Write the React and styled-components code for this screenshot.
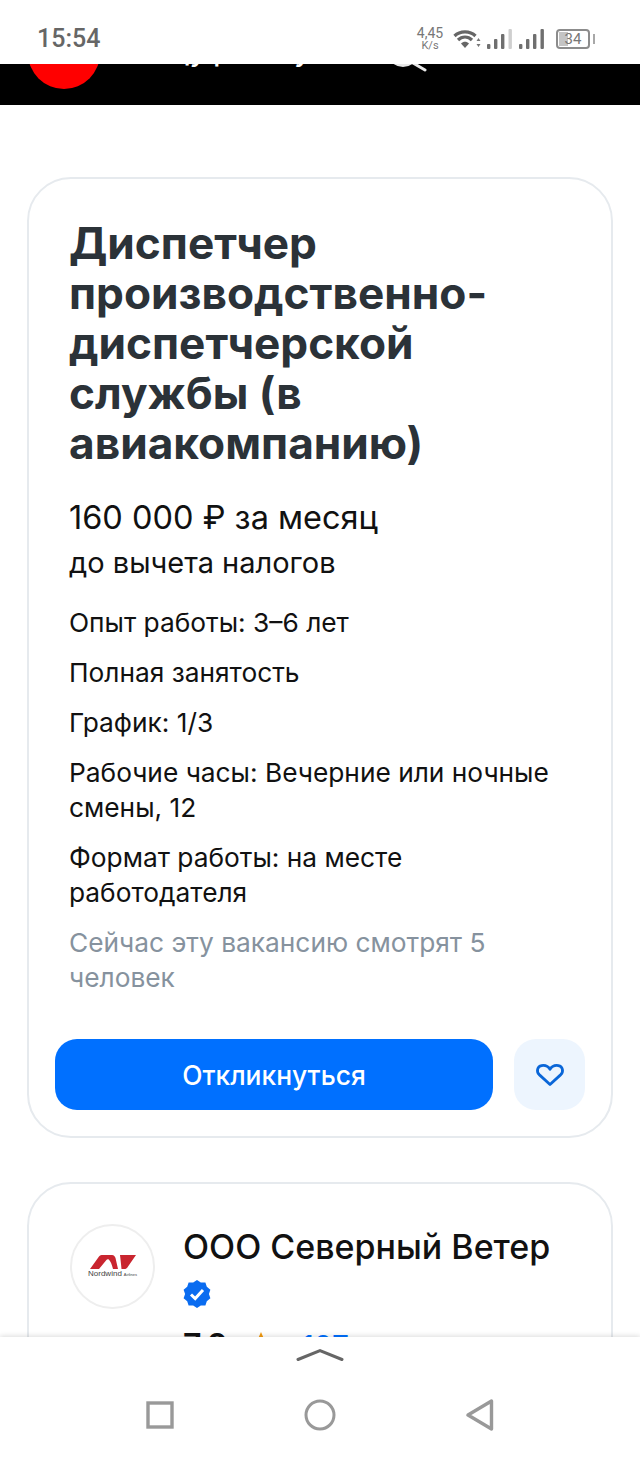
import React from 'react'
import styled, { createGlobalStyle } from 'styled-components'

const GlobalStyle = createGlobalStyle`
    html, body {
        margin: 0;
        padding: 0;
        background: #fff;
    }
    * {
        box-sizing: border-box;
    }
`

const Screen = styled.div`
    width: 640px;
    height: 1458px;
    display: flex;
    flex-direction: column;
    overflow: hidden;
    background: #fff;
    font-family: Inter, 'Liberation Sans', sans-serif;
`

/* system status bar */
const StatusBar = styled.div`
    flex: none;
    height: 64px;
    display: flex;
    align-items: center;
    padding: 14px 50px 0 37px;
    font-family: Roboto, sans-serif;
    color: #666;
`

const Clock = styled.div`
    font-size: 25px;
    line-height: 28px;
    font-weight: 500;
    margin-right: auto;
`

const NetSpeed = styled.div`
    width: 28px;
    margin-right: 9px;
    text-align: center;
    font-size: 14px;
    line-height: 13px;
    color: #777;

    small {
        display: block;
        font-size: 11px;
        line-height: 12px;
    }
`

const StatusIcons = styled.div`
    display: flex;
    align-items: center;
`

const WifiIcon = styled.svg`
    margin-right: 6px;
`

const Signals = styled.div`
    display: flex;
    gap: 7px;
`

const BatteryBox = styled.div`
    position: relative;
    width: 34px;
    height: 20px;
    margin-left: 12px;
    border: 2px solid #8c8c8c;
    border-radius: 4px;
    font-size: 15px;
    line-height: 16px;
    text-align: center;
    color: #777;

    &::before {
        content: '';
        position: absolute;
        left: 1px;
        top: 1px;
        bottom: 1px;
        width: 9px;
        background: #c4c4c4;
    }

    &::after {
        content: '';
        position: absolute;
        right: -7px;
        top: 3px;
        width: 2px;
        height: 10px;
        background: #a8a8a8;
    }
`

const BatteryLevel = styled.span`
    position: relative;
`

const Content = styled.main`
    flex: 1;
    min-height: 0;
    overflow: hidden;
    display: flex;
    flex-direction: column;
`

/* black site header, scrolled almost out of the view */
const SiteHeader = styled.header`
    flex: none;
    height: 41px;
    background: #000;
    display: flex;
    align-items: flex-end;
    overflow: hidden;
    padding-left: 28px;
    color: #fff;
`

const LogoDot = styled.div`
    flex: none;
    width: 72px;
    height: 72px;
    margin-bottom: 16px;
    border-radius: 50%;
    background: #f00;
`

const HeaderTitle = styled.div`
    flex: none;
    width: 240px;
    margin: 0 0 37px 44px;
    font-size: 28px;
    line-height: 34px;
    font-weight: 500;
    white-space: nowrap;
`

const SearchIcon = styled.svg`
    flex: none;
    margin: 0 0 33px 4px;
`

const Cards = styled.div`
    display: flex;
    flex-direction: column;
    gap: 44px;
    padding: 72px 27px 0;
`

const Card = styled.section`
    border: 2px solid #e6eaee;
    border-radius: 44px;
    padding: ${(props) => props.$padding};
    background: #fff;
`

const Body = styled.div`
    padding: 0 14px;
`

const Title = styled.h1`
    margin: 0;
    font-size: 44.2px;
    line-height: 50px;
    font-weight: 700;
    color: #2b3238;
`

const Salary = styled.div`
    margin-top: 25px;
    font-size: 32.5px;
    line-height: 50px;
    color: #111;
`

const SalaryNote = styled.div`
    font-size: 29px;
    line-height: 40px;
    color: #111;
`

const Facts = styled.div`
    margin-top: 22px;
    display: flex;
    flex-direction: column;
    gap: 15px;
`

const Fact = styled.div`
    font-size: 26.3px;
    line-height: 35px;
    color: ${(props) => (props.$muted ? '#86929e' : '#111')};
`

const Actions = styled.div`
    display: flex;
    gap: 21px;
    margin-top: 44px;
`

const ApplyButton = styled.button`
    flex: 1;
    height: 71px;
    border: 0;
    border-radius: 22px;
    background: #0070ff;
    color: #fff;
    font-family: inherit;
    font-size: 26.4px;
    font-weight: 500;
`

const FavButton = styled.button`
    flex: none;
    width: 71px;
    height: 71px;
    border: 0;
    border-radius: 22px;
    background: #edf5fe;
    display: flex;
    align-items: center;
    justify-content: center;
    padding: 0;
`

const Company = styled.div`
    display: flex;
    gap: 28px;
`

const CompanyLogo = styled.div`
    flex: none;
    width: 85px;
    height: 85px;
    border: 2px solid #eeeeee;
    border-radius: 50%;
    display: flex;
    flex-direction: column;
    align-items: center;
    justify-content: center;
`

const LogoCaption = styled.div`
    font-family: 'Liberation Sans', sans-serif;
    font-size: 8px;
    line-height: 7px;
    margin-top: 1px;
    color: #444;
    white-space: nowrap;

    small {
        font-size: 4px;
        margin-left: 2px;
    }
`

const CompanyInfo = styled.div`
    padding-top: 1px;
`

const CompanyName = styled.h2`
    margin: 0;
    font-size: 34px;
    line-height: 44px;
    font-weight: 500;
    color: #111;
`

const VerifiedMark = styled.svg`
    display: block;
    margin-top: 11px;
`

const Rating = styled.div`
    display: flex;
    align-items: center;
    gap: 18px;
    margin-top: 19px;
    font-size: 32px;
    line-height: 38px;
    font-weight: 600;
    color: #111;
`

const Reviews = styled.span`
    margin-left: 8px;
    font-size: 30px;
    font-weight: 400;
    color: #0070ff;
`

/* system navigation bar */
const NavBar = styled.nav`
    position: relative;
    flex: none;
    height: 121px;
    background: #fff;
    box-shadow: 0 -1px 5px rgba(0, 0, 0, 0.14);
    display: flex;
    flex-direction: column;
    align-items: center;
    padding-top: 11px;
`

const NavKeys = styled.div`
    display: grid;
    grid-template-columns: repeat(3, 160px);
    justify-items: center;
    margin-top: 40px;
`

const TallKey = styled.svg`
    margin-top: -2px;
`

const signalBars = [
    [0, 15, 5],
    [7, 10, 10],
    [14, 5, 15],
    [21.5, 0, 20],
]

const Signal = ({ faintLast }) => (
    <svg width="25" height="20" viewBox="0 0 25 20">
        {signalBars.map(([x, y, h], i) => (
            <rect
                key={x}
                x={x}
                y={y}
                width="3.4"
                height={h}
                rx="1"
                fill={faintLast && i === 3 ? '#cfcfcf' : '#6f6f6f'}
            />
        ))}
    </svg>
)

const App = () => {
    return (
        <Screen>
            <GlobalStyle />
            <StatusBar>
                <Clock>15:54</Clock>
                <NetSpeed>
                    4,45
                    <small>K/s</small>
                </NetSpeed>
                <StatusIcons>
                    <WifiIcon width="28" height="22" viewBox="0 0 28 22">
                        <path d="M1.500 8C7 2.500 17 2.500 22.500 8" fill="none" stroke="#666" strokeWidth="3.200" />
                        <path d="M5 12C9 8 15 8 19 12" fill="none" stroke="#666" strokeWidth="3.200" />
                        <path d="M8 15.500C10.500 13.300 13.500 13.300 16 15.500L12 20z" fill="#666" />
                        <path d="M25.500 10l2 3h-4zM25.500 19l2-3h-4z" fill="#777" />
                    </WifiIcon>
                    <Signals>
                        <Signal faintLast />
                        <Signal />
                    </Signals>
                    <BatteryBox>
                        <BatteryLevel>34</BatteryLevel>
                    </BatteryBox>
                </StatusIcons>
            </StatusBar>

            <Content>
                <SiteHeader>
                    <LogoDot />
                    <HeaderTitle>Ищу работу</HeaderTitle>
                    <SearchIcon width="40" height="40" viewBox="0 0 40 40">
                        <circle cx="15" cy="19" r="14.500" fill="none" stroke="#e8e8e8" strokeWidth="3" />
                        <path d="M25 31l12 7" fill="none" stroke="#e8e8e8" strokeWidth="3" strokeLinecap="round" />
                    </SearchIcon>
                </SiteHeader>

                <Cards>
                    <Card $padding="39px 26px 26px">
                        <Body>
                            <Title>Диспетчер производственно-диспетчерской службы (в авиакомпанию)</Title>
                            <Salary>160 000 ₽ за месяц</Salary>
                            <SalaryNote>до вычета налогов</SalaryNote>
                            <Facts>
                                <Fact>Опыт работы: 3–6 лет</Fact>
                                <Fact>Полная занятость</Fact>
                                <Fact>График: 1/3</Fact>
                                <Fact>Рабочие часы: Вечерние или ночные смены, 12</Fact>
                                <Fact>Формат работы: на месте работодателя</Fact>
                                <Fact $muted>Сейчас эту вакансию смотрят 5 человек</Fact>
                            </Facts>
                        </Body>
                        <Actions>
                            <ApplyButton>Откликнуться</ApplyButton>
                            <FavButton aria-label="В избранное">
                                <svg width="30" height="24" viewBox="0 0 30 24">
                                    <path
                                        d="M15 21.500L4.200 11.600C1.200 8.600 2.200 3.400 6.600 2.600C10 2 13.200 3.400 15 6.400C16.800 3.400 20 2 23.400 2.600C27.800 3.400 28.800 8.600 25.800 11.600z"
                                        fill="none"
                                        stroke="#0a66d8"
                                        strokeWidth="2.800"
                                        strokeLinejoin="round"
                                    />
                                </svg>
                            </FavButton>
                        </Actions>
                    </Card>

                    <Card $padding="40px 40px 40px 41px">
                        <Company>
                            <CompanyLogo>
                                <svg width="46" height="14" viewBox="0 0 46 14">
                                    <path
                                        d="M0 14L9 1.500C10 .3 11 0 13 0H22C24 0 25 1.500 25.500 3L28 14H23C22 10 20.500 6 19 4.800C18 4 17 4.300 16 5.500L9 14z"
                                        fill="#c9252f"
                                    />
                                    <path d="M30 0H46L37 13C36 14 35 14 33 14H31.500C31 9 30.500 4 30 0z" fill="#c9252f" />
                                </svg>
                                <LogoCaption>
                                    Nordwind<small>Airlines</small>
                                </LogoCaption>
                            </CompanyLogo>
                            <CompanyInfo>
                                <CompanyName>ООО Северный Ветер</CompanyName>
                                <VerifiedMark width="28" height="28" viewBox="0 0 28 28">
                                    <path
                                        d="M14 0l3.800 2.600 4.600-.2 1.400 4.400 3.600 2.900-1.500 4.300 1.500 4.300-3.600 2.900-1.400 4.400-4.600-.2L14 28l-3.800-2.600-4.600.2-1.400-4.400L.6 18.300 2.100 14 .6 9.700l3.600-2.900 1.400-4.400 4.600.2z"
                                        fill="#0a6cf0"
                                    />
                                    <path d="M8 14.500l4.200 4L20 10" fill="none" stroke="#fff" strokeWidth="3" />
                                </VerifiedMark>
                                <Rating>
                                    7.9
                                    <svg width="30" height="28" viewBox="0 0 28 26">
                                        <path d="M14 0l4 9 10 1-7.500 6.500L23 26l-9-5-9 5 2.500-9.500L0 10l10-1z" fill="#f39c12" />
                                    </svg>
                                    <Reviews>197</Reviews>
                                </Rating>
                            </CompanyInfo>
                        </Company>
                    </Card>
                </Cards>
            </Content>

            <NavBar>
                <svg width="48" height="13" viewBox="0 0 48 13">
                    <path d="M2 11.500L24 2.500L46 11.500" fill="none" stroke="#666" strokeWidth="3" strokeLinecap="round" />
                </svg>
                <NavKeys>
                    <svg width="28" height="28" viewBox="0 0 28 28">
                        <rect x="2" y="2" width="24" height="24" fill="none" stroke="#999" strokeWidth="3.400" />
                    </svg>
                    <TallKey width="32" height="32" viewBox="0 0 32 32">
                        <circle cx="16" cy="16" r="14" fill="none" stroke="#999" strokeWidth="3" />
                    </TallKey>
                    <TallKey width="28" height="32" viewBox="0 0 28 32">
                        <path d="M2 16L25.500 2V30z" fill="none" stroke="#999" strokeWidth="3.400" strokeLinejoin="round" />
                    </TallKey>
                </NavKeys>
            </NavBar>
        </Screen>
    )
}

export default App
